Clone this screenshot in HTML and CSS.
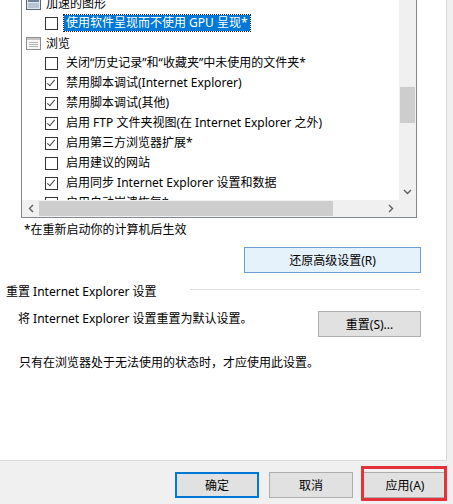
FILE: index.html
```html
<!DOCTYPE html>
<html>
<head>
    <meta charset="utf-8">
    <title>Internet 选项 - 高级</title>
    <link rel="stylesheet" href="styles.css">
</head>
<body>
<div class="page">
    <div class="listbox">
        <div class="list-view">
            <div class="list-items">
                <div class="row group">
                    <svg class="gicon" width="15" height="13" viewBox="0 0 15 13">
                        <rect x="0.5" y="0.5" width="14" height="12" fill="#dfe6ee" stroke="#5d6875"/>
                        <rect x="2" y="2" width="11" height="3" fill="#6d8299"/>
                        <rect x="2" y="6" width="11" height="5" fill="#b7c5d3"/>
                    </svg>
                    <span>加速的图形</span>
                </div>
                <div class="row item">
                    <span class="box"></span>
                    <span class="label selected">使用软件呈现而不使用 GPU 呈现*</span>
                </div>
                <div class="row group">
                    <svg class="gicon" width="15" height="13" viewBox="0 0 15 13">
                        <rect x="0.5" y="0.5" width="14" height="12" fill="#f6f6f6" stroke="#8e8e8e"/>
                        <rect x="1" y="1" width="13" height="2" fill="#c4c4c4"/>
                        <path d="M3 5.5h9M3 7.5h9M3 9.5h9" stroke="#b3b3b3"/>
                    </svg>
                    <span>浏览</span>
                </div>
                <div class="row item">
                    <span class="box"></span>
                    <span class="label">关闭“历史记录”和“收藏夹”中未使用的文件夹*</span>
                </div>
                <div class="row item">
                    <span class="box checked"></span>
                    <span class="label">禁用脚本调试(Internet Explorer)</span>
                </div>
                <div class="row item">
                    <span class="box checked"></span>
                    <span class="label">禁用脚本调试(其他)</span>
                </div>
                <div class="row item">
                    <span class="box checked"></span>
                    <span class="label">启用 FTP 文件夹视图(在 Internet Explorer 之外)</span>
                </div>
                <div class="row item">
                    <span class="box checked"></span>
                    <span class="label">启用第三方浏览器扩展*</span>
                </div>
                <div class="row item">
                    <span class="box"></span>
                    <span class="label">启用建议的网站</span>
                </div>
                <div class="row item">
                    <span class="box checked"></span>
                    <span class="label">启用同步 Internet Explorer 设置和数据</span>
                </div>
                <div class="row item">
                    <span class="box"></span>
                    <span class="label">启用自动崩溃恢复*</span>
                </div>
            </div>
        </div>
        <div class="vscroll">
            <div class="track-top"></div>
            <div class="vthumb"></div>
            <div class="track-rest"></div>
            <div class="arrow">
                <svg width="9" height="6" viewBox="0 0 9 6"><path d="M1 1l3.5 3.5L8 1" fill="none" stroke="#606060" stroke-width="1.4"/></svg>
            </div>
        </div>
        <div class="hscroll">
            <div class="arrow">
                <svg width="6" height="9" viewBox="0 0 6 9"><path d="M5 1L1.5 4.5 5 8" fill="none" stroke="#606060" stroke-width="1.4"/></svg>
            </div>
            <div class="hthumb"></div>
            <div class="track-rest"></div>
            <div class="arrow">
                <svg width="6" height="9" viewBox="0 0 6 9"><path d="M1 1l3.5 3.5L1 8" fill="none" stroke="#606060" stroke-width="1.4"/></svg>
            </div>
        </div>
        <div class="corner"></div>
    </div>

    <div class="note">*在重新启动你的计算机后生效</div>

    <div class="restore-row">
        <button class="btn btn-hover">还原高级设置(R)</button>
    </div>

    <div class="group-head">
        <span>重置 Internet Explorer 设置</span>
        <span class="group-line"></span>
    </div>

    <div class="reset-row">
        <span class="reset-text">将 Internet Explorer 设置重置为默认设置。</span>
        <button class="btn btn-reset">重置(S)...</button>
    </div>

    <div class="warn">只有在浏览器处于无法使用的状态时，才应使用此设置。</div>
</div>

<div class="footer">
    <button class="btn btn-foot btn-default">确定</button>
    <button class="btn btn-foot">取消</button>
    <button class="btn btn-foot">应用(A)</button>
</div>
<div class="mark"></div>
</body>
</html>
```

FILE: styles.css
```css
body {
    margin: 0;
    width: 453px;
    height: 504px;
    overflow: hidden;
    background: #f0f0f0;
    font-family: "Noto Sans", "Noto Sans CJK SC", sans-serif;
    font-size: 12px;
    color: #000;
    position: relative;
}

.page {
    width: 446px;
    height: 460px;
    background: #fff;
    border-right: 1px solid #d9d9d9;
    border-bottom: 1px solid #d9d9d9;
}

/* list of options */
.listbox {
    margin-left: 21px;
    width: 394px;
    height: 217px;
    border: 1px solid #828790;
    border-top: none;
    display: grid;
    grid-template-columns: 377px 17px;
    grid-template-rows: 200px 17px;
}

.list-view {
    overflow: hidden;
    background: #fff;
}

.list-items {
    margin-top: -7px;
}

.row {
    height: 20px;
    display: flex;
    align-items: center;
    white-space: nowrap;
}

.group {
    padding-left: 4px;
}

.gicon {
    margin-right: 5px;
}

.item {
    padding-left: 23px;
}

.box {
    width: 11px;
    height: 11px;
    border: 1px solid #333;
    background: #fff;
    margin-right: 6px;
    flex: none;
    position: relative;
}

.box.checked::after {
    content: "";
    position: absolute;
    left: 3px;
    top: 0px;
    width: 3px;
    height: 7px;
    border-right: 1px solid #444;
    border-bottom: 1px solid #444;
    transform: rotate(40deg);
}

.label {
    padding: 0 2px;
    line-height: 16px;
}

.label.selected {
    background: #0078d7;
    color: #fff;
    outline: 1px dotted #222;
}

/* scrollbars */
.vscroll {
    background: #f0f0f0;
    display: flex;
    flex-direction: column;
}

.track-top {
    height: 87px;
}

.vthumb {
    height: 36px;
    margin: 0 1px;
    background: #cdcdcd;
}

.track-rest {
    flex: 1;
}

.arrow {
    width: 17px;
    height: 17px;
    display: flex;
    align-items: center;
    justify-content: center;
    flex: none;
}

.hscroll {
    background: #f0f0f0;
    display: flex;
}

.hthumb {
    width: 294px;
    margin: 1px 0;
    background: #cdcdcd;
}

.corner {
    background: #f0f0f0;
}

.note {
    margin-top: 4px;
    padding-left: 24px;
    line-height: 16px;
}

/* buttons */
.btn {
    font-family: inherit;
    font-size: 12px;
    color: #000;
    height: 26px;
    padding: 0;
    background: #e1e1e1;
    border: 1px solid #adadad;
}

.restore-row {
    margin-top: 9px;
    display: flex;
    justify-content: flex-end;
    padding-right: 25px;
}

.btn-hover {
    width: 177px;
    background: #e5f1fb;
    border-color: #6f9fd0;
}

.group-head {
    margin-top: 11px;
    display: flex;
    line-height: 16px;
    padding-left: 6px;
}

.group-line {
    margin: 5px 0 0 33px;
    width: 230px;
    height: 1px;
    background: #dcdcdc;
}

.reset-row {
    margin-top: 11px;
    display: flex;
    justify-content: space-between;
    padding: 0 25px 0 18px;
}

.reset-text {
    line-height: 16px;
}

.btn-reset {
    width: 103px;
}

.warn {
    margin-top: 18px;
    padding-left: 19px;
    line-height: 16px;
}

/* dialog buttons */
.footer {
    display: flex;
    justify-content: flex-end;
    gap: 10px;
    padding: 11px 6px 0 0;
}

.btn-foot {
    width: 84px;
}

.btn-default {
    border: 2px solid #0078d7;
}

/* red annotation frame */
.mark {
    position: absolute;
    left: 361px;
    top: 466px;
    width: 80px;
    height: 29px;
    border: 3px solid #e53238;
}
```
